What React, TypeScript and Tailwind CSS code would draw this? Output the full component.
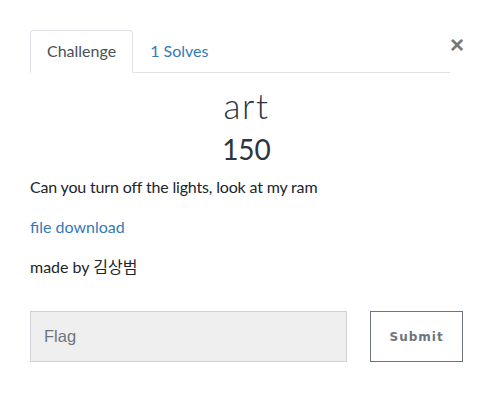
export default function App() {
  return (
    <div className="w-[493px] h-[409px] bg-white font-['Lato','Noto_Sans_CJK_KR',sans-serif] text-[#212529]">
      <div className="pt-[30px] pl-[30px] pr-[30px]">
        <div className="flex items-start">
          <div className="flex flex-1 border-b border-[#dee2e6]">
            <div className="-mb-px px-4 py-2 text-base leading-6 text-[#495057] border border-[#dee2e6] border-b-white rounded-t-[4px] bg-white">
              Challenge
            </div>
            <div className="px-4 py-2 text-base leading-6 text-[#337ab7] border border-transparent">1 Solves</div>
          </div>
          <button className="w-[13px] mt-[3px] text-[24px] leading-[24px] font-bold text-[#777] font-['Liberation_Sans',sans-serif]">
            ×
          </button>
        </div>

        <h3 className="mt-[12px] text-center text-[35px] leading-[40px] font-light tracking-[1.5px] text-[#2b3440]">art</h3>
        <h4 className="mt-[6px] text-center text-[28px] leading-[36px] font-normal text-[#2b3440]">150</h4>

        <p className="mt-[8px] text-[16px] leading-6 tracking-[-0.17px]">Can you turn off the lights, look at my ram</p>
        <p className="mt-[16px] text-[16px] leading-6">
          <a className="text-[#337ab7]">file download</a>
        </p>
        <p className="mt-[16px] text-[16px] leading-6">made by 김상범</p>

        <div className="mt-[32px] flex gap-[23px]">
          <input
            placeholder="Flag"
            className="w-[318px] h-[51px] bg-[#efefef] border border-[#ccd1d6] px-[13px] text-[16.5px] font-['Liberation_Sans',sans-serif] placeholder:text-[#6c757d] outline-none"
          />
          <button className="w-[93px] h-[51px] border border-[#6c757d] text-[#6c757d] text-[12px] font-bold tracking-[1px] font-['DejaVu_Sans',sans-serif]">
            Submit
          </button>
        </div>
      </div>
    </div>
  )
}
